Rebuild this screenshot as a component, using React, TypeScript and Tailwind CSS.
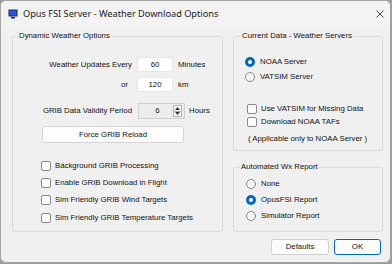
import React from 'react';

const sans = "font-['Liberation_Sans',Arial,sans-serif]";

function Check({ label, h = 'h-[17.3px]' }: { label: string; h?: string }) {
  return (
    <div className={`flex items-center ${h}`}>
      <span className="box-border h-[10px] w-[10px] rounded-[2px] border border-[#8a8a8a] bg-[#fbfbfb]" />
      <span className="ml-[4px]">{label}</span>
    </div>
  );
}

function Radio({ label, checked = false, h = 'h-[16px]' }: { label: string; checked?: boolean; h?: string }) {
  return (
    <div className={`flex items-center ${h}`}>
      {checked ? (
        <span className="flex h-[10px] w-[10px] items-center justify-center rounded-full bg-[#0067c0]">
          <span className="h-[4px] w-[4px] rounded-full bg-white" />
        </span>
      ) : (
        <span className="box-border h-[10px] w-[10px] rounded-full border border-[#8a8a8a] bg-[#f7f7f7]" />
      )}
      <span className="ml-[5px]">{label}</span>
    </div>
  );
}

function Group({ title, className, legendMl, children }: { title: string; className: string; legendMl: string; children: React.ReactNode }) {
  return (
    <fieldset className={`box-border rounded-[2px] border border-[#d9d9d9] ${className}`}>
      <legend className={`px-[1px] leading-[10px] ${legendMl}`}>{title}</legend>
      {children}
    </fieldset>
  );
}

export default function App() {
  return (
    <div className="h-[264px] w-[392px] bg-[#9c9c9c]">
      <div className="box-border flex h-[263px] w-[391px] flex-col overflow-hidden rounded-[6px] border border-[#a5a5a5] bg-[#f0f0f0]">
        {/* title bar */}
        <div className="flex h-[25px] shrink-0 items-center bg-[#f3f3f3] pl-[7px] pr-[6px]">
          <svg width="10" height="10" viewBox="0 0 10 10">
            <rect x="0.5" y="0.5" width="9" height="7" fill="#1c2470" />
            <rect x="1.5" y="1.5" width="7" height="5" fill="#2a56d8" />
            <rect x="3" y="8" width="4" height="1.5" fill="#1c2470" />
          </svg>
          <span className="ml-[5px] font-['Noto_Sans',sans-serif] text-[9.2px] text-[#1b1b1b]">
            Opus FSI Server - Weather Download Options
          </span>
          <svg className="ml-auto" width="8" height="8" viewBox="0 0 8 8">
            <path d="M0.5 0.5 L7.5 7.5 M7.5 0.5 L0.5 7.5" stroke="#333" strokeWidth="0.9" />
          </svg>
        </div>

        {/* body */}
        <div className={`flex items-start gap-[10px] pl-[11px] pt-[5px] text-[7.8px] text-[#111] ${sans}`}>
          <Group title="Dynamic Weather Options" className="h-[201px] w-[211px]" legendMl="ml-[5px]">
            <div className="mt-[16px] flex h-[15px] items-center">
              <span className="w-[119px] text-right">Weather Updates Every</span>
              <span className="ml-[5px] flex h-[15px] w-[36px] items-center justify-center border border-[#e6e6e6] bg-white">60</span>
              <span className="ml-[5px]">Minutes</span>
            </div>
            <div className="mt-[5px] flex h-[15px] items-center">
              <span className="w-[119px] pr-[4px] text-right">or</span>
              <span className="ml-[5px] flex h-[15px] w-[36px] items-center justify-center border border-[#e6e6e6] bg-white">120</span>
              <span className="ml-[5px]">km</span>
            </div>
            <div className="mt-[11px] flex h-[16px] items-center">
              <span className="w-[119px] text-right">GRIB Data Validity Period</span>
              <span className="ml-[6px] flex h-[16px] w-[47px] items-center border border-[#cfcfcf] bg-[#ececec]">
                <span className="flex-1 pl-[3px] text-center">6</span>
                <span className="mr-[2px] flex h-[12px] w-[9px] flex-col border border-[#b5b5b5] bg-white">
                  <span className="flex flex-1 items-center justify-center border-b border-[#b5b5b5]">
                    <svg width="5" height="3" viewBox="0 0 5 3"><path d="M2.5 0 L5 3 L0 3 Z" fill="#333" /></svg>
                  </span>
                  <span className="flex flex-1 items-center justify-center">
                    <svg width="5" height="3" viewBox="0 0 5 3"><path d="M0 0 L5 0 L2.5 3 Z" fill="#333" /></svg>
                  </span>
                </span>
              </span>
              <span className="ml-[4px]">Hours</span>
            </div>
            <div className="ml-[29px] mt-[7px] flex h-[17px] w-[142px] items-center justify-center rounded-[3px] border border-[#d3d3d3] bg-[#fdfdfd]">
              Force GRIB Reload
            </div>
            <div className="ml-[28px] mt-[14px] flex flex-col">
              <Check label="Background GRIB Processing" />
              <Check label="Enable GRIB Download in Flight" />
              <Check label="Sim Friendly GRIB Wind Targets" />
              <Check label="Sim Friendly GRIB Temperature Targets" />
            </div>
          </Group>

          <div className="flex w-[150px] flex-col">
            <Group title="Current Data - Weather Servers" className="h-[120px] w-[150px]" legendMl="ml-[7px]">
              <div className="ml-[11px] mt-[14px]">
                <Radio label="NOAA Server" checked h="h-[14px]" />
                <div className="mt-[1px]">
                  <Radio label="VATSIM Server" h="h-[14px]" />
                </div>
              </div>
              <div className="ml-[13px] mt-[19px]">
                <Check label="Use VATSIM for Missing Data" h="h-[12.5px]" />
                <Check label="Download NOAA TAFs" h="h-[12.5px]" />
              </div>
              <div className="ml-[14px] mt-[5px] flex h-[12px] items-center">( Applicable only to NOAA Server )</div>
            </Group>

            <Group title="Automated Wx Report" className="mt-[11px] h-[70px] w-[150px]" legendMl="ml-[6px]">
              <div className="ml-[12px] mt-[4px]">
                <Radio label="None" />
                <Radio label="OpusFSI Report" checked />
                <Radio label="Simulator Report" />
              </div>
            </Group>

            <div className="mt-[7px] flex justify-end gap-[5px] pr-[2px]">
              <div className="flex h-[16px] w-[58px] items-center justify-center rounded-[3px] border border-[#d0d0d0] bg-[#fdfdfd]">Defaults</div>
              <div className="flex h-[16px] w-[47px] items-center justify-center rounded-[3px] border border-[#0067c0] bg-[#fdfdfd]">OK</div>
            </div>
          </div>
        </div>
      </div>
    </div>
  );
}
